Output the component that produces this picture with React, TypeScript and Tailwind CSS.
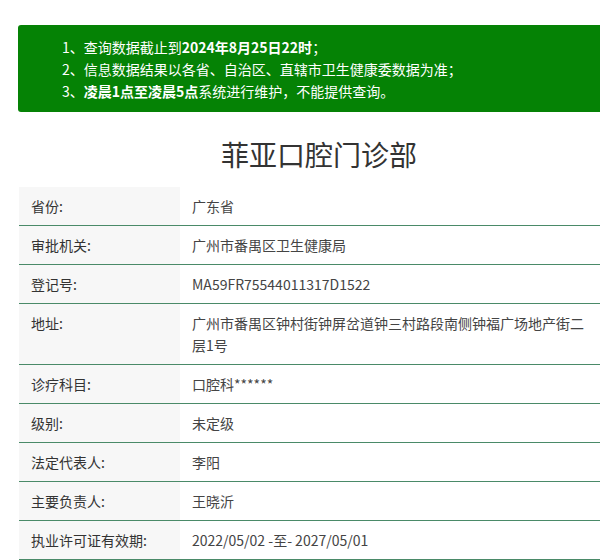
const rows: { label: string; value: string }[] = [
  { label: "省份:", value: "广东省" },
  { label: "审批机关:", value: "广州市番禺区卫生健康局" },
  { label: "登记号:", value: "MA59FR75544011317D1522" },
  { label: "地址:", value: "广州市番禺区钟村街钟屏岔道钟三村路段南侧钟福广场地产街二层1号" },
  { label: "诊疗科目:", value: "口腔科******" },
  { label: "级别:", value: "未定级" },
  { label: "法定代表人:", value: "李阳" },
  { label: "主要负责人:", value: "王晓沂" },
  { label: "执业许可证有效期:", value: "2022/05/02 -至- 2027/05/01" },
];

export default function App() {
  return (
    <div
      className="w-[600px] h-[560px] overflow-hidden bg-white text-[#333]"
      style={{ fontFamily: '"Microsoft YaHei", "Noto Sans CJK SC", "Noto Sans", sans-serif' }}
    >
      <div className="ml-[18px] w-[610px] pt-[25px]">
        <div className="bg-[#058205] rounded-[3px] text-white text-[14px] leading-[22px] pl-[44px] pt-[11px] pb-[10px]">
          <p>
            1、查询数据截止到<b className="font-bold">2024年8月25日22时</b>；
          </p>
          <p>2、信息数据结果以各省、自治区、直辖市卫生健康委数据为准；</p>
          <p>
            3、<b className="font-bold">凌晨1点至凌晨5点</b>系统进行维护，不能提供查询。
          </p>
        </div>
      </div>
      <div className="ml-[19px] w-[600px]">
        <h1 className="text-[28px] leading-[40px] text-center pt-[22px] pb-[13px] text-[#333] font-normal">
          菲亚口腔门诊部
        </h1>
        <div className="flex flex-col">
          {rows.map((row, i) => (
            <div className="flex border-b border-[#4a8a68] text-[14px]" key={i}>
              <div className="w-[161px] shrink-0 bg-[#f7f7f7] pl-[12px] py-[8px] leading-[22px]">
                {row.label}
              </div>
              <div className="flex-1 pl-[12px] pr-[24px] py-[8px] leading-[22px] text-[#444]">
                {row.value}
              </div>
            </div>
          ))}
        </div>
      </div>
    </div>
  );
}
